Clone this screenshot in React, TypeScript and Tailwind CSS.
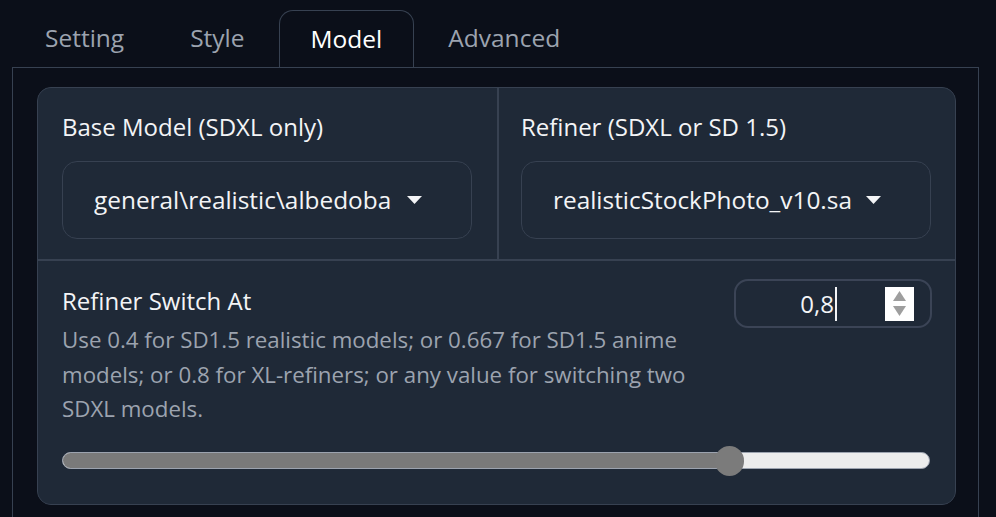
import React from "react";

const font = "font-['Open_Sans','Noto_Sans',sans-serif]";

function Tab({ label, active }: { label: string; active?: boolean }) {
  if (active) {
    return (
      <div className="relative z-10 -mb-px flex h-[57px] items-center rounded-t-[14px] border border-b-0 border-[#374151] bg-[#0b0f19] px-[31px] text-[24.5px] text-white">
        {label}
      </div>
    );
  }
  return (
    <div className="flex h-[57px] items-center border border-transparent px-[31px] text-[24.5px] text-[#9ca3af]">
      {label}
    </div>
  );
}

function Dropdown({ value }: { value: string }) {
  return (
    <div className="flex h-[78px] items-center rounded-[15px] border border-[#374151] bg-[#1f2937] pl-[31px]">
      <div className="w-[298px] overflow-hidden whitespace-nowrap text-[24.4px] leading-[32px] text-[#f3f4f6]">
        {value}
      </div>
      <svg className="ml-[15px]" width="15" height="9" viewBox="0 0 15 9">
        <polygon points="0,0 15,0 7.5,8" fill="#f3f4f6" />
      </svg>
    </div>
  );
}

export default function App() {
  const ratio = (0.8 - 0.1) / 0.9;
  return (
    <div className={`min-h-screen bg-[#0b0f19] pt-[10px] ${font}`}>
      <div className="flex gap-[2px] pl-[13px]">
        <Tab label="Setting" />
        <Tab label="Style" />
        <Tab label="Model" active />
        <Tab label="Advanced" />
      </div>
      <div className="ml-[12px] mr-[17px] border border-b-0 border-[#374151] pl-[24px] pr-[22px] pt-[19px] pb-[12px]">
        <div className="flex flex-col gap-[2px] overflow-hidden rounded-[14px] border border-[#374151] bg-[#374151]">
          <div className="flex gap-[2px]">
            <div className="flex-1 bg-[#1f2937] pl-[24px] pr-[25px] pt-[23px] pb-[20px]">
              <div className="text-[24px] leading-[32px] text-[#f3f4f6]">Base Model (SDXL only)</div>
              <div className="mt-[18px]">
                <Dropdown value="general\realistic\albedobaseXL_v21.safetensors" />
              </div>
            </div>
            <div className="flex-1 bg-[#1f2937] pl-[22px] pr-[24px] pt-[23px] pb-[20px]">
              <div className="text-[24px] leading-[32px] text-[#f3f4f6]">Refiner (SDXL or SD 1.5)</div>
              <div className="mt-[18px]">
                <Dropdown value="realisticStockPhoto_v10.safetensors" />
              </div>
            </div>
          </div>
          <div className="bg-[#1f2937] pl-[24px] pr-[23px] pt-[18px] pb-[28px]">
            <div className="flex items-start justify-between">
              <div className="mt-[6px] w-[660px]">
                <div className="text-[24px] leading-[32px] text-[#f3f4f6]">Refiner Switch At</div>
                <div className="mt-[6px] text-[22.3px] leading-[34.5px] text-[#9ca3af]">
                  Use 0.4 for SD1.5 realistic models; or 0.667 for SD1.5 anime models; or 0.8 for XL-refiners; or any value for switching two SDXL models.
                </div>
              </div>
              <div className="flex h-[49px] w-[198px] items-center rounded-[14px] border-2 border-[#3b4456] bg-[#1f2937]">
                <div className="flex flex-1 items-center justify-end">
                  <span className="text-[24px] leading-[32px] text-[#f3f4f6]">0,8</span>
                  <span className="ml-px h-[34px] w-[2px] bg-[#f3f4f6]" />
                </div>
                <div className="ml-[48px] mr-[16px] flex h-[34px] w-[29px] flex-col items-center justify-center gap-[5px] bg-white">
                  <svg width="13" height="10" viewBox="0 0 13 10">
                    <polygon points="6.5,0 13,10 0,10" fill="#9e9e9e" />
                  </svg>
                  <svg width="13" height="10" viewBox="0 0 13 10">
                    <polygon points="0,0 13,0 6.5,10" fill="#9e9e9e" />
                  </svg>
                </div>
              </div>
            </div>
            <div className="relative mt-[19px] h-[30px] w-[868px]">
              <div className="absolute left-0 right-0 top-[6px] h-[17px] overflow-hidden rounded-full border border-[#9ca3af] bg-[#ececec]">
                <div className="h-full bg-[#7a7a7a]" style={{ width: `${14.5 + ratio * (868 - 29)}px` }} />
              </div>
              <div
                className="absolute top-0 h-[30px] w-[29px] rounded-full bg-[#7b7b7b]"
                style={{ left: `${ratio * (868 - 29)}px` }}
              />
            </div>
          </div>
        </div>
      </div>
    </div>
  );
}
